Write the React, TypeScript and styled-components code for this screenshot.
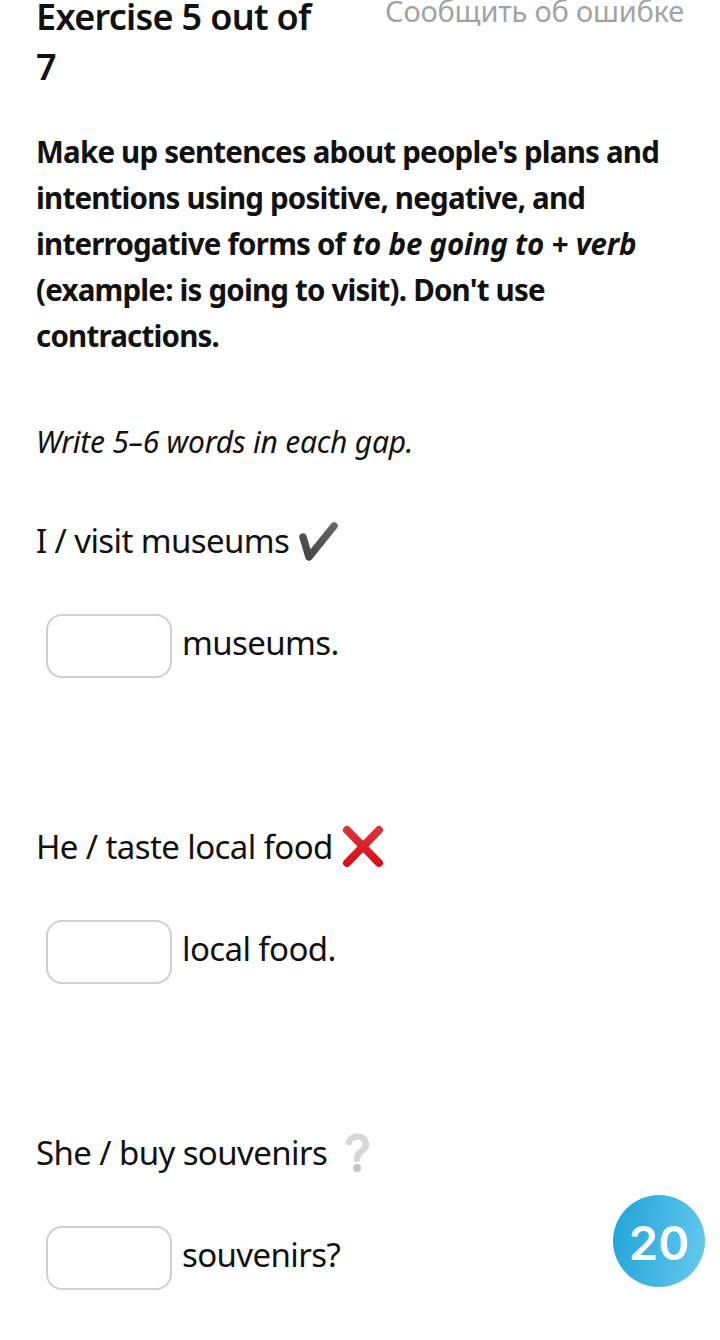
import styled, { createGlobalStyle } from 'styled-components'

const GlobalStyle = createGlobalStyle`
  html, body {
    margin: 0;
    padding: 0;
    height: 1340px;
    overflow: hidden;
    background: #fff;
  }
`

const questions = [
  { id: 1, prompt: 'I / visit museums', mark: 'check', ending: 'museums.' },
  { id: 2, prompt: 'He / taste local food', mark: 'cross', ending: 'local food.' },
  { id: 3, prompt: 'She / buy souvenirs', mark: 'question', ending: 'souvenirs?' },
]

function Mark({ type }: { type: string }) {
  if (type === 'check') {
    return (
      <CheckIcon width="44" height="44" viewBox="0 0 44 44">
        <defs>
          <linearGradient id="checkFill" x1="0" y1="1" x2="1" y2="0">
            <stop offset="0" stopColor="#444" />
            <stop offset="1" stopColor="#666" />
          </linearGradient>
        </defs>
        <path d="M6 18 L12 38 L37 7" fill="none" stroke="url(#checkFill)" strokeWidth="7.5" strokeLinecap="round" strokeLinejoin="round" />
      </CheckIcon>
    )
  }
  if (type === 'cross') {
    return (
      <CrossIcon width="44" height="44" viewBox="0 0 44 44">
        <defs>
          <linearGradient id="crossFill" x1="0" y1="0" x2="0" y2="1">
            <stop offset="0" stopColor="#d9303a" />
            <stop offset="1" stopColor="#d9101c" />
          </linearGradient>
        </defs>
        <path d="M6 5 L38 38 M38 5 L6 38" fill="none" stroke="url(#crossFill)" strokeWidth="8" strokeLinecap="round" />
      </CrossIcon>
    )
  }
  return (
    <QuestionIcon width="36" height="44" viewBox="0 0 36 44">
      <path d="M10 11 C12 4 26 3 27 13 C27.500 20 18 20 18 28" fill="none" stroke="#d6d6d6" strokeWidth="6.500" strokeLinecap="round" />
      <circle cx="18" cy="37" r="4" fill="#c4c4c4" />
    </QuestionIcon>
  )
}

export default function App() {
  return (
    <Page>
      <GlobalStyle />
      <Header>
        <Title>Exercise 5 out of 7</Title>
        <ReportLink>Сообщить об ошибке</ReportLink>
      </Header>
      <Task>
        Make up sentences about people's plans and intentions using positive, negative, and interrogative forms of{' '}
        <TaskForm>to be going to + verb</TaskForm> (example: is going to visit). Don't use contractions.
      </Task>
      <Hint>Write 5–6 words in each gap.</Hint>
      {questions.map((question) => (
        <Question key={question.id}>
          <Prompt>
            {question.prompt}
            <Mark type={question.mark} />
          </Prompt>
          <AnswerRow>
            <Gap type="text" />
            <Ending>{question.ending}</Ending>
          </AnswerRow>
        </Question>
      ))}
      <Counter>20</Counter>
    </Page>
  )
}

const Page = styled.div`
  position: relative;
  width: 720px;
  height: 1340px;
  box-sizing: border-box;
  padding: 0 36px;
  overflow: hidden;
  color: #111;
  font-family: 'Noto Sans', sans-serif;
`

const Header = styled.div`
  display: flex;
  justify-content: space-between;
  align-items: flex-start;
  margin-top: -8px;
`

const Title = styled.h1`
  width: 290px;
  margin: 0;
  font-size: 36px;
  font-weight: 600;
  line-height: 50px;
  letter-spacing: -0.7px;
`

const ReportLink = styled.a`
  margin-top: 1px;
  color: #a3a3a3;
  font-size: 29px;
  line-height: 36px;
  letter-spacing: -0.2px;
`

const Task = styled.p`
  margin: 37px 0 0;
  font-size: 29.5px;
  font-weight: 700;
  line-height: 46px;
  letter-spacing: -0.8px;
`

const TaskForm = styled.em`
  letter-spacing: -0.2px;
`

const Hint = styled.p`
  margin: 60px 0 0;
  font-size: 30px;
  font-style: italic;
  line-height: 46px;
  letter-spacing: -0.25px;
`

const Question = styled.div`
  box-sizing: border-box;
  height: 306px;
  padding-top: 53px;
`

const Prompt = styled.div`
  display: flex;
  align-items: center;
  height: 46px;
  font-size: 33px;
  line-height: 46px;
  letter-spacing: -0.6px;
`

const CheckIcon = styled.svg`
  margin-left: 8px;
`

const CrossIcon = styled.svg`
  margin-left: 8px;
`

const QuestionIcon = styled.svg`
  margin-left: 12px;
`

const AnswerRow = styled.div`
  display: flex;
  align-items: center;
  gap: 10px;
  margin: 50px 0 0 10px;
`

const Gap = styled.input`
  width: 126px;
  height: 64px;
  box-sizing: border-box;
  border: 2px solid #cfcfcf;
  border-radius: 16px;
  background: #fff;
  outline: none;
`

const Ending = styled.span`
  margin-top: -6px;
  font-size: 33px;
  line-height: 46px;
  letter-spacing: -0.6px;
`

const Counter = styled.div`
  position: absolute;
  top: 1195px;
  left: 613px;
  display: flex;
  align-items: center;
  justify-content: center;
  box-sizing: border-box;
  width: 92px;
  height: 92px;
  padding-top: 3px;
  border-radius: 50%;
  background: linear-gradient(100deg, #1fa3d8 0%, #66c9ef 100%);
  color: #fff;
  font-family: 'Inter', sans-serif;
  font-size: 47px;
  font-weight: 600;
`
